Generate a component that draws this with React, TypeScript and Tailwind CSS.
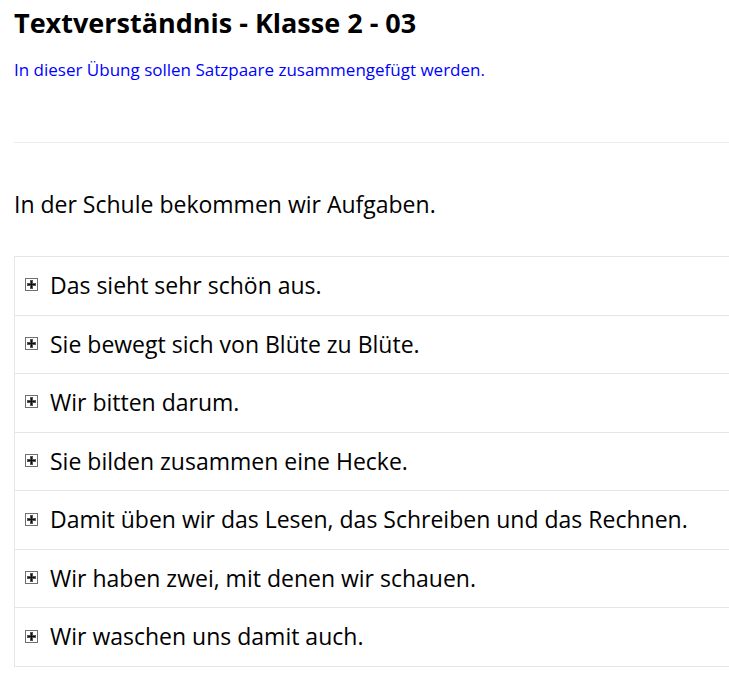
const items = [
  "Das sieht sehr schön aus.",
  "Sie bewegt sich von Blüte zu Blüte.",
  "Wir bitten darum.",
  "Sie bilden zusammen eine Hecke.",
  "Damit üben wir das Lesen, das Schreiben und das Rechnen.",
  "Wir haben zwei, mit denen wir schauen.",
  "Wir waschen uns damit auch.",
];

function PlusBox() {
  return (
    <svg width="13" height="13" viewBox="0 0 13 13" className="shrink-0 block">
      <rect x="0.5" y="0.5" width="12" height="12" fill="#fff" stroke="#707070" />
      <rect x="5" y="2" width="3" height="9" fill="#555" />
      <rect x="2" y="5" width="9" height="3" fill="#555" />
      <rect x="6" y="3" width="1" height="7" fill="#111" />
      <rect x="3" y="6" width="7" height="1" fill="#111" />
    </svg>
  );
}

export default function App() {
  return (
    <div className="min-h-[700px] bg-white overflow-hidden pl-[14px] text-black" style={{ fontFamily: "'Open Sans', sans-serif" }}>
      <h1 className="pt-[5px] text-[27px] leading-[36px] font-bold whitespace-nowrap">Textverständnis - Klasse 2 - 03</h1>
      <p className="mt-[17px] text-[17px] leading-[24px] text-[#0000ff] whitespace-nowrap">
        In dieser Übung sollen Satzpaare zusammengefügt werden.
      </p>
      <div className="mt-[60px] h-px bg-[#ececec]"></div>
      <p className="mt-[45px] text-[23px] leading-[32px] whitespace-nowrap">In der Schule bekommen wir Aufgaben.</p>
      <div className="mt-[36px] border-l border-t border-[#e6e6e6]">
        {items.map((t) => (
          <div key={t} className="flex items-center border-b border-[#e6e6e6] pl-[10px] py-[13px]">
            <div className="mr-[12px] -mt-[2px]">
              <PlusBox />
            </div>
            <span className="text-[23px] leading-[31.57px] whitespace-nowrap">{t}</span>
          </div>
        ))}
      </div>
    </div>
  );
}
